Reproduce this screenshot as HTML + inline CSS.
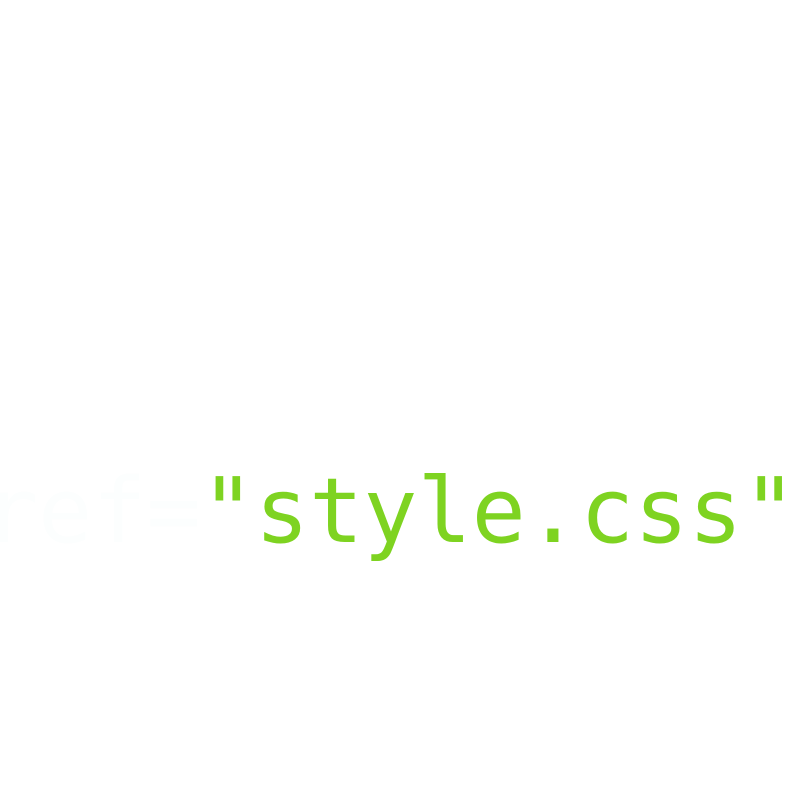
<!DOCTYPE html>
<html><head><meta charset="utf-8"><style>
html,body{margin:0;padding:0;width:800px;height:800px;background:#fff;overflow:hidden}
.t{position:absolute;left:-16px;top:452px;font-family:"DejaVu Sans Mono","Liberation Mono",monospace;font-size:90px;line-height:120px;white-space:pre;color:#7ed321}
.w{color:#fcfefe}
</style></head><body>
<div class="t"><span class="w">ref=</span>"style.css"</div>
</body></html>
